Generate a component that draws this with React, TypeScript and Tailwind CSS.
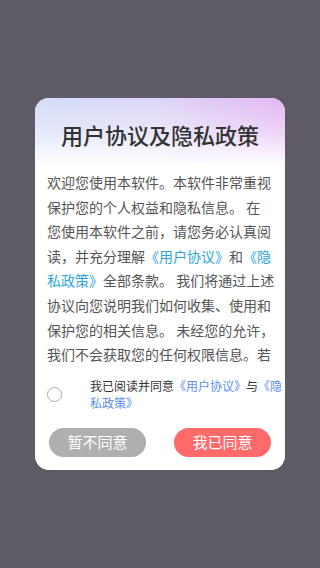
import React, { useState } from "react";

const font = { fontFamily: '"Noto Sans CJK SC", "Noto Sans", sans-serif' };

export default function App() {
  const [checked, setChecked] = useState(false);

  return (
    <div className="w-[320px] h-[568px] bg-[#5e5b66] flex items-start justify-center pt-[98px]" style={font}>
      <div className="w-[250px] h-[372px] bg-white rounded-[14px] overflow-hidden flex flex-col">
        {/* header with soft gradient */}
        <div className="relative h-[68px] flex items-center justify-center bg-gradient-to-r from-[#d3dcf8] via-[#dcd6f6] to-[#e3b6f2]">
          <div className="absolute inset-0 bg-gradient-to-b from-transparent via-white/40 to-white" />
          <h2 className="relative text-[22px] leading-none font-medium text-[#333] mt-[4px]">用户协议及隐私政策</h2>
        </div>

        {/* scrollable agreement text */}
        <div className="h-[202px] overflow-hidden px-[12px] pt-[4px]">
          <p className="text-[14px] leading-[24.6px] text-[#555] whitespace-nowrap">
            欢迎您使用本软件。本软件非常重视<br />
            保护您的个人权益和隐私信息。 在<br />
            您使用本软件之前，请您务必认真阅<br />
            读，并充分理解<span className="text-[#2ba6dc]">《用户协议》</span>和<span className="text-[#2ba6dc]">《隐</span><br />
            <span className="text-[#2ba6dc]">私政策》</span>全部条款。 我们将通过上述<br />
            协议向您说明我们如何收集、使用和<br />
            保护您的相关信息。 未经您的允许，<br />
            我们不会获取您的任何权限信息。若<br />
            您同意，请点击“我已同意”开始使<br />
            用我们的服务。
          </p>
        </div>

        {/* agree checkbox */}
        <div className="flex items-center pl-[12px] pr-[4px] mt-[9px]">
          <button
            onClick={() => setChecked(!checked)}
            className="w-[15px] h-[15px] rounded-full border border-[#aaa] shrink-0 flex items-center justify-center"
          >
            {checked && <span className="w-[7px] h-[7px] rounded-full bg-[#ff6a6a]" />}
          </button>
          <p className="ml-[28px] text-[12px] leading-[17px] text-[#333] whitespace-nowrap">
            我已阅读并同意<span className="text-[#5a8ef0]">《用户协议》</span>与<span className="text-[#5a8ef0]">《隐</span>
            <br />
            <span className="text-[#5a8ef0]">私政策》</span>
          </p>
        </div>

        {/* actions */}
        <div className="flex justify-between px-[14px] mt-[17px]">
          <button className="w-[97px] h-[29px] rounded-full bg-[#afafaf] text-white text-[15px]">暂不同意</button>
          <button className="w-[97px] h-[29px] rounded-full bg-[#ff6a6a] text-white text-[15px]">我已同意</button>
        </div>
      </div>
    </div>
  );
}
